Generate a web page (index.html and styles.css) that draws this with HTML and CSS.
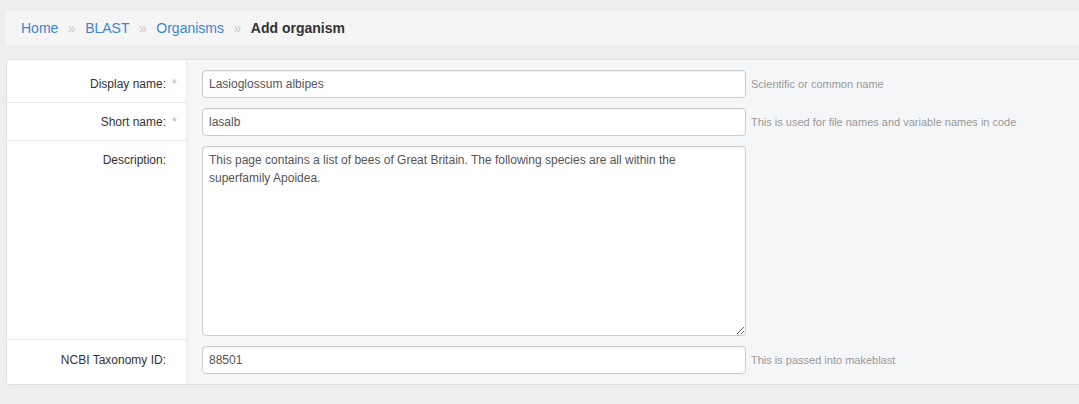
FILE: index.html
```html
<!DOCTYPE html>
<html lang="en">
<head>
<meta charset="utf-8">
<title>Add organism</title>
<link rel="stylesheet" href="styles.css">
</head>
<body>
<div class="page">
  <nav class="breadcrumb">
    <a href="#" class="crumb">Home</a><span class="sep">»</span>
    <a href="#" class="crumb">BLAST</a><span class="sep">»</span>
    <a href="#" class="crumb">Organisms</a><span class="sep">»</span>
    <span class="crumb current">Add organism</span>
  </nav>

  <form class="panel">
    <div class="row first">
      <label class="label" for="dn"><span>Display name:</span><span class="req">*</span></label>
      <div class="field">
        <input id="dn" class="control" type="text" value="Lasioglossum albipes">
        <span class="help">Scientific or common name</span>
      </div>
    </div>
    <div class="row">
      <label class="label" for="sn"><span>Short name:</span><span class="req">*</span></label>
      <div class="field">
        <input id="sn" class="control" type="text" value="lasalb">
        <span class="help">This is used for file names and variable names in code</span>
      </div>
    </div>
    <div class="row">
      <label class="label" for="desc"><span>Description:</span><span class="req"></span></label>
      <div class="field">
        <textarea id="desc" class="control area" spellcheck="false">This page contains a list of bees of Great Britain. The following species are all within the superfamily Apoidea.</textarea>
      </div>
    </div>
    <div class="row last">
      <label class="label" for="tx"><span>NCBI Taxonomy ID:</span><span class="req"></span></label>
      <div class="field">
        <input id="tx" class="control" type="text" value="88501">
        <span class="help">This is passed into makeblast</span>
      </div>
    </div>
  </form>
</div>
</body>
</html>
```

FILE: styles.css
```css
html, body {
  margin: 0;
  padding: 0;
  overflow: hidden;
}
body {
  background: #edeef0;
  font-family: "Liberation Sans", Arial, sans-serif;
  color: #333;
  font-size: 12px;
}
.page {
  padding: 11px 0 0 6px;
  width: 1100px;
}
.breadcrumb {
  display: flex;
  align-items: center;
  height: 34px;
  padding: 0 15px;
  background: #f5f5f5;
  border-radius: 4px;
  font-size: 14px;
  margin-bottom: 14px;
}
.crumb {
  color: #3a87d0;
  text-decoration: none;
}
.crumb.current {
  color: #333;
  font-weight: bold;
}
.sep {
  color: #c8c8c8;
  padding: 0 9.5px;
}
.panel {
  border: 1px solid #dddddd;
  border-radius: 4px;
  background: #f5f6f8;
  overflow: hidden;
}
.row {
  display: grid;
  grid-template-columns: 180px 1fr;
}
.label {
  background: #fff;
  display: flex;
  justify-content: flex-end;
  align-items: flex-start;
  padding: 5px 0 4px;
  line-height: 28px;
  border-bottom: 1px solid #e6e6e6;
  border-right: 1px solid #eaeaea;
  color: #333;
}
.req {
  width: 20px;
  color: #b4b4b4;
  padding-left: 6px;
  box-sizing: border-box;
}
.field {
  display: flex;
  align-items: center;
  align-self: start;
  padding: 5px 0 4px 15px;
}
.row.first .label, .row.first .field {
  padding-top: 10px;
}
.row.last .label, .row.last .field {
  padding-top: 6px;
  padding-bottom: 10px;
}
.row.last .label {
  border-bottom: none;
}
.control {
  box-sizing: border-box;
  width: 544px;
  height: 28px;
  padding: 4px 6px;
  border: 1px solid #cccccc;
  border-radius: 4px;
  background: #fff;
  font-family: "Liberation Sans", Arial, sans-serif;
  font-size: 12px;
  line-height: 18px;
  color: #555;
  margin: 0;
  box-shadow: inset 0 1px 1px rgba(0,0,0,0.06);
}
.control.area {
  height: 190px;
  resize: vertical;
  display: block;
}
.help {
  margin-left: 5px;
  color: #999;
  font-size: 11px;
}
```
